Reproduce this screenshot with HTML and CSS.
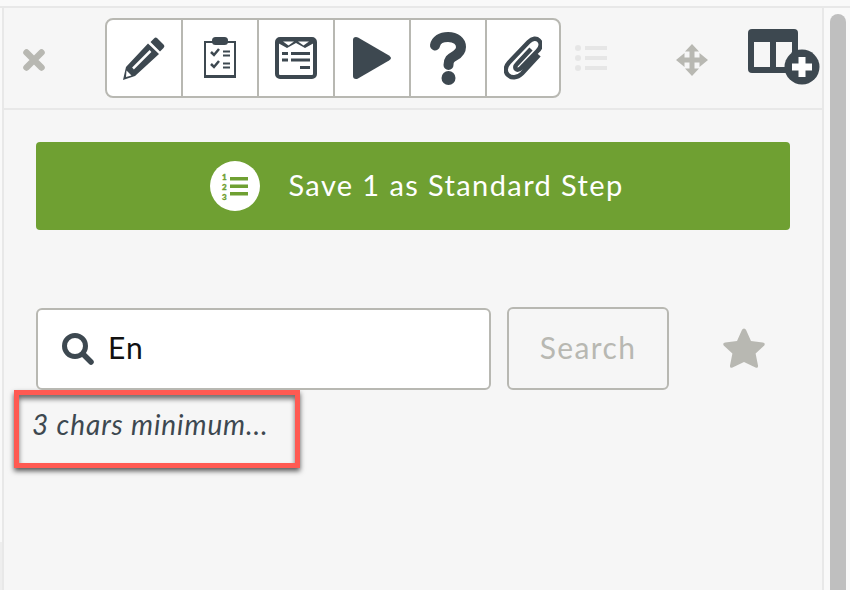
FILE: index.html
```html
<!DOCTYPE html>
<html lang="en">
<head>
    <meta charset="UTF-8">
    <meta name="viewport" content="width=device-width, initial-scale=1.0">
    <title>Standard Steps</title>
    <link rel="stylesheet" href="styles.css">
</head>
<body>

    <div class="top-rule"></div>

    <div class="main">
        <div class="gutter"><div class="gutter-end"></div></div>

        <div class="panel">

            <!-- Toolbar row -->
            <div class="toolbar-row">
                <svg class="close-icon" width="22" height="22" viewBox="0 0 22 22"><path d="M3.500 3.500l15 15M18.500 3.500l-15 15" stroke="#b8b8b2" stroke-width="6.500" stroke-linecap="round"/></svg>

                <div class="toolbar">
                    <button class="tool">
                        <svg width="44" height="44" viewBox="0 0 44 44"><path d="M32 2.500q1.500-1.500 3-.5l7 7q1 1.500-.5 3L38 15.500 28.500 6zM26 7.500L37 18 13 40 1 44 4 31z" fill="#3d4850"/><path d="M11 32.500L28.500 15" stroke="#fff" stroke-width="2.500"/><path d="M4.500 34.500l5 5-5.500 1.500z" fill="#fff"/></svg>
                    </button>
                    <button class="tool">
                        <svg width="34" height="42" viewBox="0 0 34 42"><path d="M1 4h32v37H1z" fill="#3d4850"/><path d="M3 6h28v32H3z" fill="#fff"/><rect x="9" y="0" width="16" height="8" rx="3.500" fill="#3d4850"/><path d="M8 15l3 3 5-6M8 27l3 3 5-6" fill="none" stroke="#3d4850" stroke-width="2.500"/><path d="M20 14.500h7M20 18.500h7M20 26.500h7M20 30.500h7" stroke="#3d4850" stroke-width="2.200"/></svg>
                    </button>
                    <button class="tool">
                        <svg width="42" height="42" viewBox="0 0 42 42"><rect x="2" y="2" width="38" height="38" rx="3" fill="#fff" stroke="#3d4850" stroke-width="4"/><path d="M3 3h36v3l-9 5-9-5-9 5-9-5z" fill="#3d4850"/><path d="M8 4.500h11l-5.500 4zM23 4.500h11l-5.500 4z" fill="#fff"/><path d="M7 15h6v3H7zM16 15h19v3H16zM7 21.500h6v3H7zM16 21.500h19v3H16zM25 29h10v3H25z" fill="#3d4850"/></svg>
                    </button>
                    <button class="tool">
                        <svg width="38" height="42" viewBox="0 0 38 42"><path d="M0 3q0-3 3-3 1 0 2 .5l31 18q2 1.500 2 2.500t-2 2.500l-31 18q-1 .5-2 .5-3 0-3-3z" fill="#3d4850"/></svg>
                    </button>
                    <button class="tool">
                        <svg width="38" height="54" viewBox="0 0 38 54"><path d="M6 14.500C7 9 12 6 19 6c8 0 13 4.500 13 10 0 4.500-3 7-6.500 9-4 2.300-6 3.500-6 9" fill="none" stroke="#3d4850" stroke-width="10" stroke-linecap="round"/><circle cx="19.500" cy="47" r="7" fill="#3d4850"/></svg>
                    </button>
                    <button class="tool">
                        <svg width="38" height="44" viewBox="0 0 38 44"><path d="M35 19L18 37.500c-5 5-11 4.500-14 1.500s-3-8 1-12.500L24.500 6c4-4 8-4 10.500-1.500S37.500 11 33.500 15L17 32c-2 2-4 2-5 1s-1-3 1-5L27 13" fill="none" stroke="#3d4850" stroke-width="4.500"/></svg>
                    </button>
                </div>

                <svg class="list-icon" width="32" height="26" viewBox="0 0 32 26"><circle cx="3" cy="3" r="3"/><circle cx="3" cy="13" r="3"/><circle cx="3" cy="23" r="3"/><path d="M10 1h22v4H10zM10 11h22v4H10zM10 21h22v4H10z"/></svg>

                <svg class="move-icon" width="32" height="32" viewBox="0 0 32 32"><path d="M16 0l7 7.500h-4.500v6h5V9l8.500 7-8.500 7v-4.500h-5v6H23L16 32l-7-7.500h4.500v-6h-5V23L0 16l8.500-7v4.500h5v-6H9z"/></svg>

                <svg class="layout-icon" width="72" height="56" viewBox="0 0 72 56"><rect width="50" height="44" rx="4" fill="#3d4850"/><path d="M6 13h16v25H6zM28 13h16v25H28z" fill="#f6f6f6"/><circle cx="54" cy="38" r="17.500" fill="#3d4850"/><path d="M50.500 28h7v6.500H64v7h-6.500V48h-7v-6.500H44v-7h6.500z" fill="#fff"/></svg>
            </div>

            <div class="content">
                <button class="save-btn">
                    <svg width="50" height="50" viewBox="0 0 50 50"><circle cx="25" cy="25" r="25" fill="#fff"/><text class="step-nums" x="12" y="19">1</text><text class="step-nums" x="12" y="29">2</text><text class="step-nums" x="12" y="39">3</text><path d="M20 16h18v3.500H20zM20 23.500h18V27H20zM20 31h18v3.500H20z" fill="#6fa032"/></svg>
                    <span class="save-label">Save 1 as Standard Step</span>
                </button>

                <div class="search-row">
                    <div class="search-box">
                        <svg width="32" height="32" viewBox="0 0 32 32"><circle cx="13" cy="13" r="10.500" fill="none" stroke="#3d4850" stroke-width="5"/><path d="M21 21l8 8" stroke="#3d4850" stroke-width="5.500" stroke-linecap="round"/></svg>
                        <input type="text" value="En">
                    </div>
                    <button class="search-btn">Search</button>
                    <svg class="star-icon" width="44" height="44" viewBox="0 0 44 44"><path d="M22 1.500q1.500 0 2.200 1.800l4.800 10.700 11.700 1.400q3 .5 1.600 3l-8.700 8.200 2.400 12q.3 3-2.500 2L22 35l-11.500 5.600q-2.800 1-2.500-2l2.400-12-8.700-8.200q-1.400-2.500 1.600-3L15 14l4.800-10.700q.7-1.800 2.200-1.800z"/></svg>
                </div>

                <div class="hint">3 chars minimum...</div>
            </div>
        </div>

        <div class="scroll-track">
            <div class="scroll-thumb"></div>
        </div>
    </div>

</body>
</html>
```

FILE: styles.css
```css
* {
    margin: 0;
    padding: 0;
    box-sizing: border-box;
}

body {
    font-family: "Lato", "Open Sans", sans-serif;
    background-color: #f9f9f9;
    width: 850px;
    height: 590px;
    overflow: hidden;
    padding-top: 6px;
    display: flex;
    flex-direction: column;
}

button {
    font-family: inherit;
    border: none;
    background: none;
}

.top-rule {
    height: 2px;
    background-color: #e8e8e8;
}

.main {
    flex: 1;
    display: flex;
}

.gutter {
    width: 2px;
    display: flex;
    flex-direction: column;
    justify-content: flex-end;
}

.gutter-end {
    height: 48px;
    background-color: #eeeeee;
}

.panel {
    width: 822px;
    background-color: #f6f6f6;
    border-left: 2px solid #e8e8e8;
    border-right: 2px solid #e8e8e8;
}

.toolbar-row {
    height: 102px;
    border-bottom: 2px solid #e8e8e8;
    display: flex;
    align-items: flex-start;
}

.close-icon {
    margin: 41px 0 0 19px;
}

.toolbar {
    display: flex;
    margin: 10px 0 0 60px;
    width: 456px;
    height: 80px;
    background-color: #fff;
    border: 2px solid #b8b8b2;
    border-radius: 8px;
}

.tool {
    width: 76px;
    display: flex;
    justify-content: center;
    align-items: center;
    border-right: 2px solid #b8b8b2;
}

.tool:last-child {
    flex: 1;
    border-right: none;
}

.list-icon {
    margin: 37px 0 0 14px;
    fill: #e6e6e6;
}

.move-icon {
    margin: 36px 0 0 69px;
    fill: #b8b8b2;
}

.layout-icon {
    margin: 21px 0 0 40px;
}

.content {
    padding: 32px 32px 0;
}

.save-btn {
    width: 100%;
    height: 88px;
    padding-left: 8px;
    background-color: #6fa032;
    border-radius: 4px;
    color: #fff;
    font-size: 29px;
    display: flex;
    justify-content: center;
    align-items: center;
    gap: 28px;
}

.save-label {
    letter-spacing: 1.4px;
    margin-top: -4px;
}

.step-nums {
    font-family: "Lato", sans-serif;
    font-size: 8px;
    font-weight: 900;
    fill: #6fa032;
    stroke: #6fa032;
    stroke-width: 0.4px;
}

.search-row {
    display: flex;
    align-items: flex-end;
    margin-top: 77px;
}

.search-box {
    width: 455px;
    height: 82px;
    background-color: #fff;
    border: 2px solid #b8b8b2;
    border-radius: 6px;
    padding-left: 24px;
    display: flex;
    align-items: center;
    gap: 14px;
}

.search-box input {
    flex: 1;
    min-width: 0;
    height: 60px;
    padding-bottom: 4px;
    border: none;
    outline: none;
    background: none;
    font-family: inherit;
    font-size: 30px;
    letter-spacing: 1px;
    color: #111;
}

.search-btn {
    width: 162px;
    height: 83px;
    margin-left: 16px;
    padding-bottom: 4px;
    border: 2px solid #b8b8b2;
    border-radius: 6px;
    color: #b8b8b2;
    font-size: 30px;
    letter-spacing: 1.4px;
}

.star-icon {
    margin: 0 0 19px 53px;
    fill: #b8b8b2;
}

.hint {
    width: 286px;
    height: 78px;
    margin-left: -22px;
    padding: 12px 0 0 13px;
    border: 5px solid #ff5a52;
    box-shadow: 0 3px 5px rgba(0, 0, 0, 0.65), inset 0 4px 5px rgba(0, 0, 0, 0.55);
    color: #3d4850;
    font-size: 28px;
    font-style: italic;
    letter-spacing: 0.9px;
}

.scroll-track {
    flex: 1;
    padding: 6px 4px 0 6px;
}

.scroll-thumb {
    height: 100%;
    background-color: #bfbfbf;
    border-radius: 8px 8px 0 0;
}
```
